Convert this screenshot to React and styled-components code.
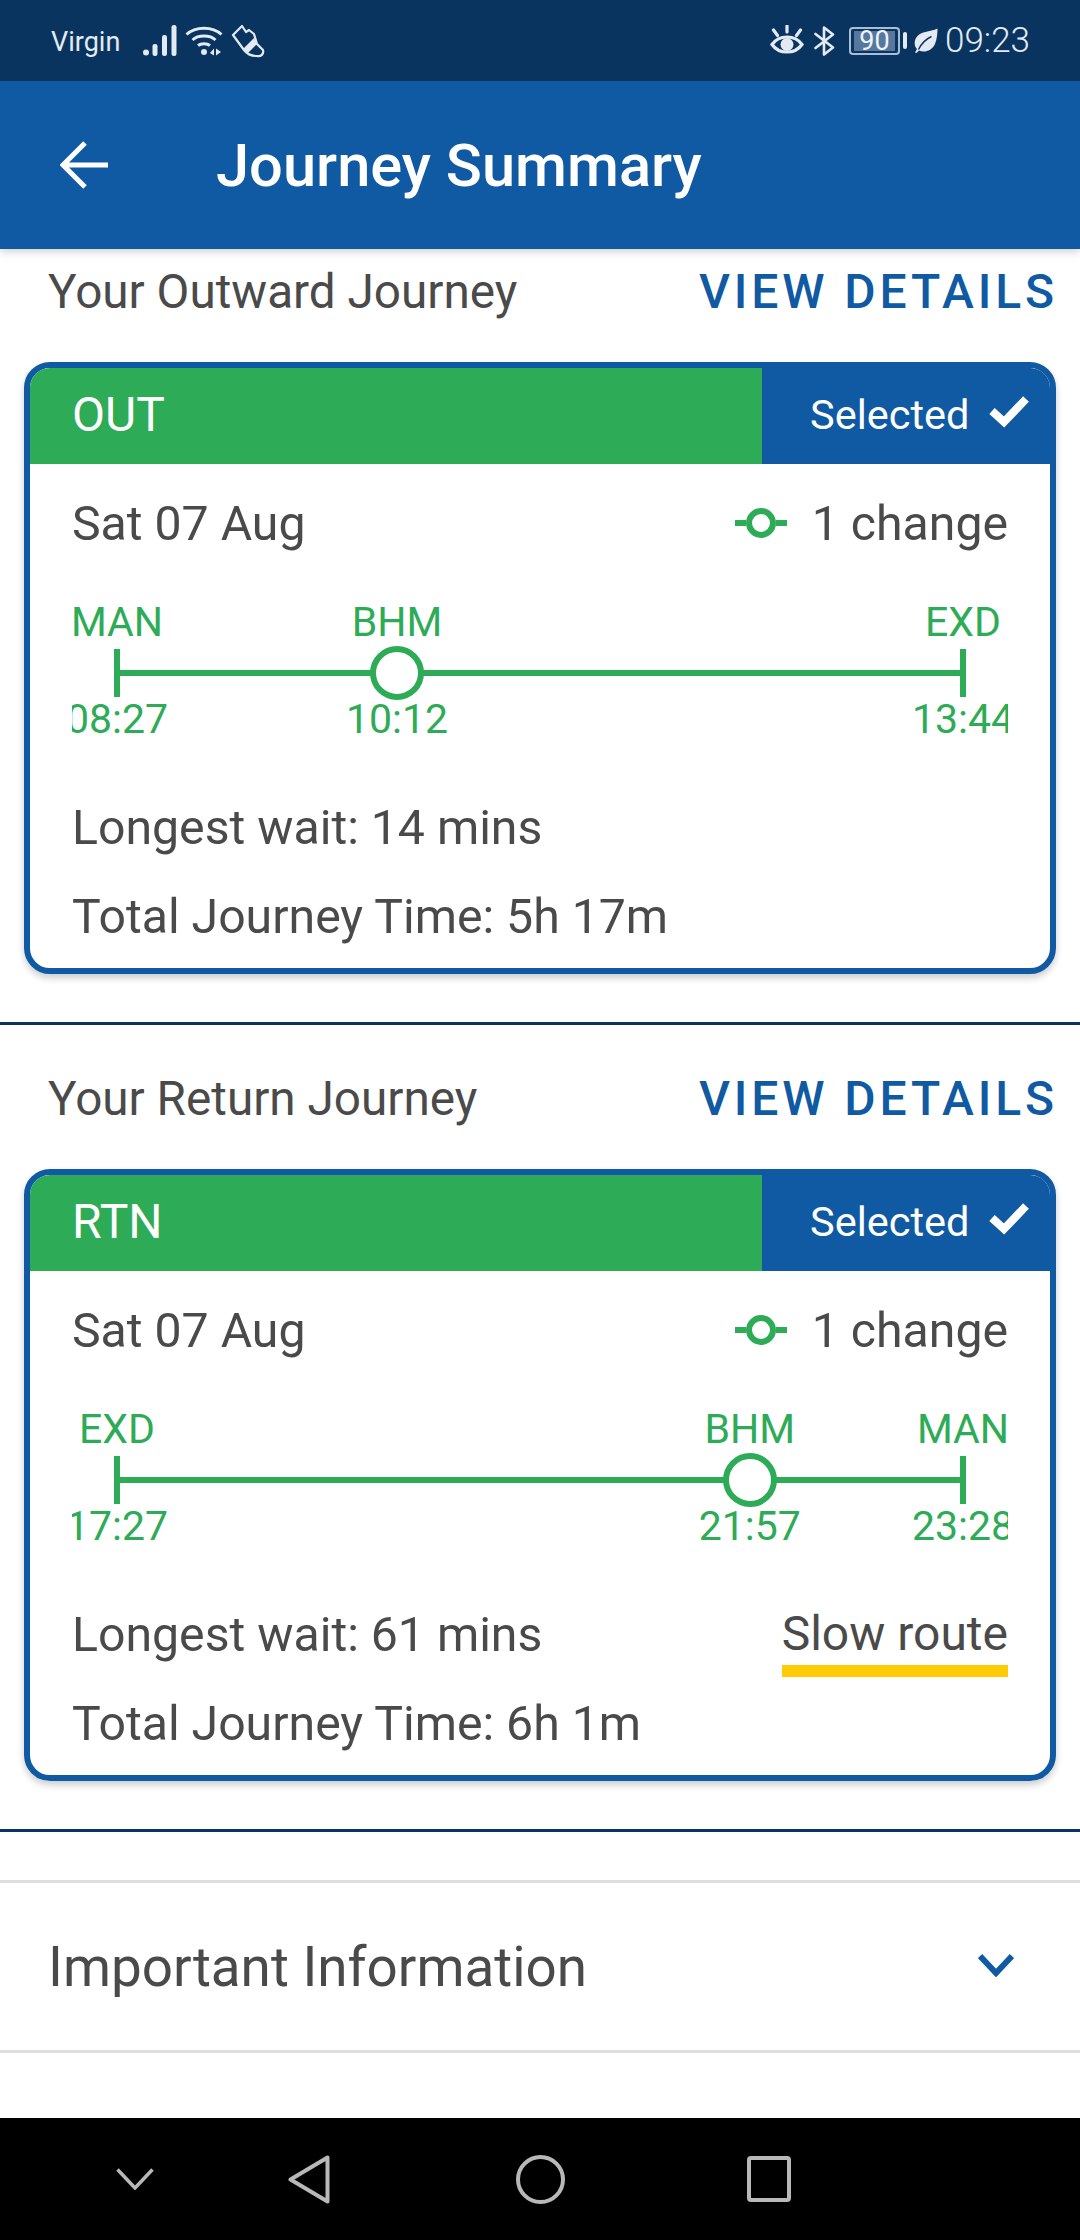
import styled, { createGlobalStyle } from 'styled-components';

const GlobalStyle = createGlobalStyle`
  html, body {
    margin: 0;
    padding: 0;
    background: #fff;
    font-family: Roboto, "Liberation Sans", sans-serif;
  }
  * { box-sizing: border-box; }
`;

const Screen = styled.div`
  width: 1080px;
  height: 2240px;
  display: flex;
  flex-direction: column;
  overflow: hidden;
  background: #fff;
`;

const StatusBar = styled.div`
  height: 81px;
  flex: none;
  background: #0a3460;
  color: #e3eaf2;
  display: flex;
  align-items: center;
  padding: 0 51px;
  position: relative;
  z-index: 2;
`;

const Carrier = styled.span`
  font-size: 27px;
  width: 92px;
  margin-top: 2px;
`;

const StatusLeft = styled.div`
  display: flex;
  align-items: center;
  gap: 8px;
`;

const StatusRight = styled.div`
  margin-left: auto;
  display: flex;
  align-items: center;
  gap: 10px;
`;

const Battery = styled.div`
  width: 51px;
  height: 28px;
  border: 2px solid #a9bed4;
  border-radius: 4px;
  padding: 2px 3px;
  margin-left: 4px;
  display: flex;
`;

const BatteryFill = styled.div`
  flex: 1;
  background: #56789f;
  color: #eef3f8;
  font-size: 27px;
  line-height: 20px;
  text-align: center;
`;

const BatteryTip = styled.div`
  width: 4px;
  height: 17px;
  border-radius: 2px;
  background: #e3eaf2;
  margin-left: -7px;
  margin-right: -3px;
`;

const Clock = styled.span`
  font-size: 35px;
  font-weight: 300;
  line-height: 1;
  margin-left: -3px;
  margin-right: -1px;
`;

const AppBar = styled.header`
  height: 168px;
  flex: none;
  background: #0f5aa2;
  color: #fff;
  display: flex;
  align-items: center;
  padding-left: 60px;
  position: relative;
  z-index: 1;
  box-shadow: 0 3px 8px rgba(0, 0, 0, 0.18);
`;

const Title = styled.h1`
  margin: 4px 0 0 108px;
  font-size: 59.6px;
  font-weight: 500;
  line-height: 1;
`;

const Scroller = styled.main`
  flex: 1;
  min-height: 0;
  overflow: hidden;
`;

const ScrollInner = styled.div`
  margin-top: -31px;
`;

const Section = styled.section`
  height: 807px;
  border-bottom: 3px solid #0a3460;
  padding: 0 24px;
`;

const SectionHead = styled.div`
  height: 144px;
  display: flex;
  justify-content: space-between;
  padding: 46px 0 0 24px;
`;

const SectionTitle = styled.h2`
  margin: 0;
  font-size: 47.7px;
  font-weight: 400;
  line-height: 56px;
  color: #4a4a4a;
`;

const ViewDetails = styled.a`
  font-size: 48px;
  font-weight: 500;
  line-height: 56px;
  letter-spacing: 3.9px;
  color: #0f5aa2;
  margin-right: -2px;
`;

const Card = styled.article`
  height: 612px;
  background: #fff;
  border: 6px solid #0f5aa2;
  border-radius: 26px;
  overflow: hidden;
  display: flex;
  flex-direction: column;
`;

const CardWrap = styled.div`
  border-radius: 26px;
  box-shadow: 0 4px 7px rgba(0, 0, 0, 0.2);
`;

const CardHead = styled.div`
  height: 96px;
  flex: none;
  display: flex;
  color: #fff;
`;

const Direction = styled.div`
  flex: 1;
  background: #2dab56;
  font-size: 48px;
  line-height: 94px;
  padding-left: 42px;
`;

const SelectedTag = styled.div`
  width: 288px;
  background: #0f5aa2;
  display: flex;
  align-items: center;
  font-size: 41.5px;
  padding: 0 0 3px 48px;
  gap: 20px;

  svg {
    margin-bottom: 5px;
  }
`;

const CardBody = styled.div`
  flex: 1;
  padding: 0 42px;
  color: #4a4a4a;
`;

const Row = styled.div`
  display: flex;
  align-items: center;
  justify-content: space-between;
  font-size: 48.2px;
  height: ${(p) => p.$height}px;
`;

const Changes = styled.div`
  display: flex;
  align-items: center;
  gap: 25px;
`;

const Timeline = styled.div`
  height: 150px;
  margin-top: 16px;
  margin-bottom: 38px;
  padding: 0 45px;
  display: flex;
  align-items: flex-start;
  overflow: hidden;
`;

const Stop = styled.div`
  width: 110px;
  margin: 0 -55px;
  flex: none;
  display: flex;
  flex-direction: column;
  align-items: center;
  color: #2dab56;
  font-size: 41px;
  white-space: nowrap;
  position: relative;
  z-index: 1;
`;

const StopCode = styled.span`
  height: 48px;
  line-height: 48px;
`;

const StopTime = styled.span`
  height: 48px;
  line-height: 48px;
  margin-top: -5px;
`;

const StopMark = styled.div`
  height: 54px;
  flex: none;
  display: flex;
  align-items: center;
  justify-content: center;
`;

const Tick = styled.div`
  width: 6px;
  height: 48px;
  background: #2dab56;
`;

const Ring = styled.div`
  width: 54px;
  height: 54px;
  border: 6px solid #2dab56;
  border-radius: 50%;
  background: #fff;
`;

const Segment = styled.div`
  height: 6px;
  margin-top: 72px;
  background: #2dab56;
`;

const SlowRoute = styled.span`
  display: block;
  height: 69px;
  font-size: 48px;
  line-height: 52px;
  margin-top: 16px;
  border-bottom: 12px solid #ffcb05;
`;

const Accordion = styled.div`
  margin-top: 48px;
  height: 173px;
  border-top: 3px solid #dedede;
  border-bottom: 3px solid #dedede;
  display: flex;
  align-items: center;
  justify-content: space-between;
  padding: 0 66px 0 48px;
  font-size: 54.8px;
  color: #4a4a4a;

  svg {
    margin-bottom: 3px;
  }
`;

const NavBar = styled.nav`
  height: 122px;
  flex: none;
  background: #000;
  display: flex;
  align-items: center;
  padding-left: 116px;
`;

const NavSlot = styled.div`
  width: ${(p) => p.$width}px;
  flex: none;
  display: flex;
`;

const Signal = () => (
  <svg width="34" height="32" viewBox="0 0 34 32" fill="#e3eaf2">
    <circle cx="3" cy="27.5" r="3" />
    <rect x="9.5" y="19" width="5" height="12" rx="2.2" />
    <rect x="19" y="10" width="5" height="21" rx="2.2" />
    <rect x="28.5" y="0" width="5" height="31" rx="2.2" />
  </svg>
);

const Wifi = () => (
  <svg width="38" height="32" viewBox="0 0 38 32" fill="none" stroke="#e3eaf2" strokeWidth="3">
    <path d="M1.5 9.5C10.5 1 27.5 1 36.5 9.5" />
    <path d="M7.5 15C13 9.8 25 9.8 30.5 15" />
    <path d="M13 20.5C16 18 22 18 25 20.5" />
    <circle cx="19" cy="27" r="3" fill="#e3eaf2" stroke="none" />
    <path d="M29 23.5v7l-4-2.5zM31 23.5v7l5-3.5z" fill="#e3eaf2" stroke="none" />
  </svg>
);

const Shoe = () => (
  <svg width="34" height="34" viewBox="0 0 34 34" fill="none" stroke="#e3eaf2" strokeWidth="2.2" strokeLinejoin="round">
    <path d="M2 11 11 2 15 8 18 6 23 10 26 20 32 26C33 30 30 33 26 32 20 32 16 30 13 26z" />
    <path d="M12 25 23 14 26 20 17 29z" fill="#e3eaf2" stroke="none" />
  </svg>
);

const Eye = () => (
  <svg width="34" height="31" viewBox="0 0 34 31" fill="none" stroke="#e3eaf2" strokeWidth="3.2" strokeLinecap="round">
    <path d="M2 19.5C9 9.5 25 9.5 32 19.5 25 29.5 9 29.5 2 19.5z" />
    <circle cx="17" cy="19.5" r="6.5" fill="#e3eaf2" stroke="none" />
    <path d="M17 1v6M3.5 5l4 5.5M30.5 5l-4 5.5" />
  </svg>
);

const Bluetooth = () => (
  <svg width="21" height="30" viewBox="0 0 21 30" fill="none" stroke="#e3eaf2" strokeWidth="2.6" strokeLinejoin="round" strokeLinecap="round">
    <path d="M1.5 8 19 21.5 10 28.5V1.5L19 8.5 1.5 22" />
  </svg>
);

const Leaf = () => (
  <svg width="24" height="26" viewBox="0 0 24 26">
    <path d="M23.5 0.5C16 4 6 3 2 10-0.5 15 1 19 3 21L1 24.5 2.5 25 5 22.5C10 25 18 23 21 16 23 11 23.5 5 23.5 0.5z" fill="#e3eaf2" />
    <path d="M4.5 21.5C8 14.5 12 11 17.5 8.5" fill="none" stroke="#0a3460" strokeWidth="1.4" />
  </svg>
);

const Check = () => (
  <svg width="40" height="32" viewBox="0 0 40 32" fill="none" stroke="#fff" strokeWidth="8">
    <path d="M3 15 15 26 37 3" />
  </svg>
);

const ChangeIcon = () => (
  <svg width="52" height="30" viewBox="0 0 52 30" fill="none" stroke="#2dab56" strokeWidth="6">
    <path d="M0 15h11M41 15h11" />
    <circle cx="26" cy="15" r="12" />
  </svg>
);

const Stops = ({ stop, last, middle }) => (
  <>
    <Stop>
      <StopCode>{stop.code}</StopCode>
      <StopMark>{middle ? <Ring /> : <Tick />}</StopMark>
      <StopTime>{stop.time}</StopTime>
    </Stop>
    {!last && <Segment style={{ flexGrow: stop.leg }} />}
  </>
);

const Journey = ({ direction, stops, wait, total, slow }) => (
  <Section>
    <SectionHead>
      <SectionTitle>Your {direction === 'OUT' ? 'Outward' : 'Return'} Journey</SectionTitle>
      <ViewDetails>VIEW DETAILS</ViewDetails>
    </SectionHead>
    <CardWrap>
      <Card>
        <CardHead>
          <Direction>{direction}</Direction>
          <SelectedTag>
            Selected
            <Check />
          </SelectedTag>
        </CardHead>
        <CardBody>
          <Row $height={118}>
            <span>Sat 07 Aug</span>
            <Changes>
              <ChangeIcon />
              <span>1 change</span>
            </Changes>
          </Row>
          <Timeline>
            {stops.map((s, i) => (
              <Stops key={s.code} stop={s} last={i === stops.length - 1} middle={i > 0 && i < stops.length - 1} />
            ))}
          </Timeline>
          <Row $height={82}>
            <span>Longest wait: {wait}</span>
            {slow && <SlowRoute>Slow route</SlowRoute>}
          </Row>
          <Row $height={96}>
            <span>Total Journey Time: {total}</span>
          </Row>
        </CardBody>
      </Card>
    </CardWrap>
  </Section>
);

const App = () => (
  <Screen>
    <GlobalStyle />
    <StatusBar>
      <Carrier>Virgin</Carrier>
      <StatusLeft>
        <Signal />
        <Wifi />
        <Shoe />
      </StatusLeft>
      <StatusRight>
        <Eye />
        <Bluetooth />
        <Battery>
          <BatteryFill>90</BatteryFill>
        </Battery>
        <BatteryTip />
        <Leaf />
        <Clock>09:23</Clock>
      </StatusRight>
    </StatusBar>
    <AppBar>
      <svg width="48" height="48" viewBox="0 0 48 48" fill="none" stroke="#fff" strokeWidth="5">
        <path d="M48 24H3M25 2 3 24l22 22" />
      </svg>
      <Title>Journey Summary</Title>
    </AppBar>
    <Scroller>
      <ScrollInner>
        <Journey
          direction="OUT"
          wait="14 mins"
          total="5h 17m"
          stops={[
            { code: 'MAN', time: '08:27', leg: 280 },
            { code: 'BHM', time: '10:12', leg: 566 },
            { code: 'EXD', time: '13:44' },
          ]}
        />
        <Journey
          direction="RTN"
          wait="61 mins"
          total="6h 1m"
          slow
          stops={[
            { code: 'EXD', time: '17:27', leg: 632 },
            { code: 'BHM', time: '21:57', leg: 213 },
            { code: 'MAN', time: '23:28' },
          ]}
        />
        <Accordion>
          <span>Important Information</span>
          <svg width="36" height="24" viewBox="0 0 36 24" fill="none" stroke="#0f5aa2" strokeWidth="6">
            <path d="M2 3 18 20 34 3" />
          </svg>
        </Accordion>
      </ScrollInner>
    </Scroller>
    <NavBar>
      <NavSlot $width={172}>
        <svg width="38" height="22" viewBox="0 0 38 22" fill="none" stroke="#b8b8b8" strokeWidth="3.5">
          <path d="M1.5 1.5 19 20 36.5 1.5" />
        </svg>
      </NavSlot>
      <NavSlot $width={228}>
        <svg width="42" height="49" viewBox="0 0 42 49" fill="none" stroke="#b8b8b8" strokeWidth="4" strokeLinejoin="round">
          <path d="M39.5 2.5V46.5L2.5 24.5z" />
        </svg>
      </NavSlot>
      <NavSlot $width={231}>
        <svg width="49" height="49" viewBox="0 0 49 49" fill="none" stroke="#b8b8b8" strokeWidth="4">
          <circle cx="24.5" cy="24.5" r="22.5" />
        </svg>
      </NavSlot>
      <NavSlot $width={44}>
        <svg width="44" height="46" viewBox="0 0 44 46" fill="none" stroke="#b8b8b8" strokeWidth="4" strokeLinejoin="round">
          <rect x="2" y="2" width="40" height="42" rx="2" />
        </svg>
      </NavSlot>
    </NavBar>
  </Screen>
);

export default App;
